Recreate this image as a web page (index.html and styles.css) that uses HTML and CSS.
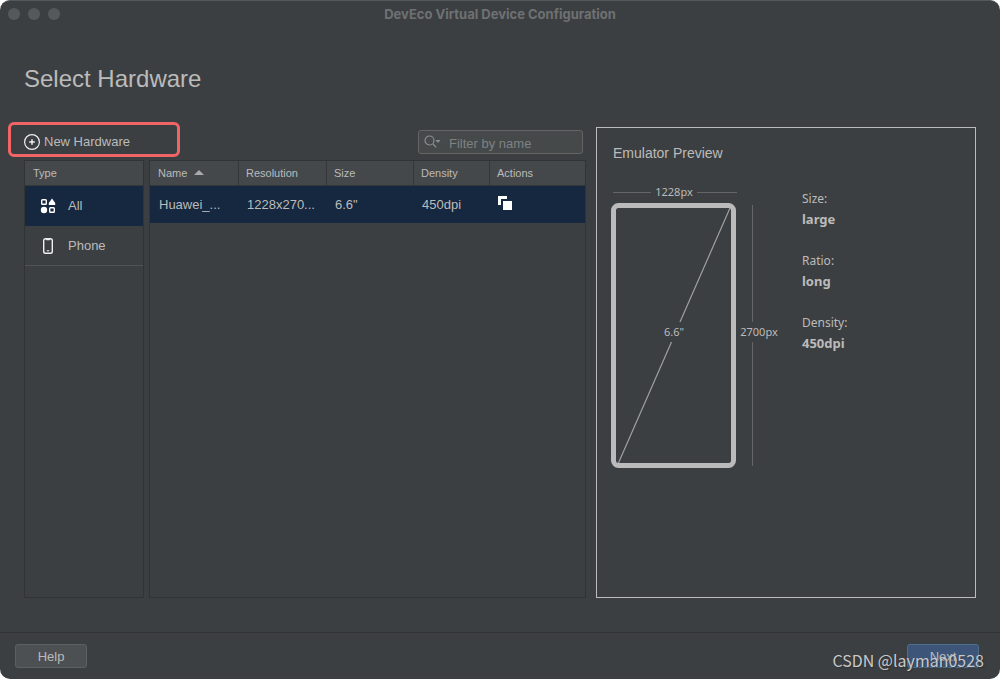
FILE: index.html
```
<!DOCTYPE html>
<html lang="en">
<head>
<meta charset="utf-8">
<title>DevEco Virtual Device Configuration</title>
<link rel="stylesheet" href="styles.css">
</head>
<body>
<div class="window">
  <header class="titlebar">
    <div class="lights"><span class="light"></span><span class="light"></span><span class="light"></span></div>
    <div class="window-title">DevEco Virtual Device Configuration</div>
  </header>
  <main class="main">
    <h1 class="heading">Select Hardware</h1>
    <div class="columns">
      <section class="picker">
        <div class="toolbar">
          <button class="new-hardware" type="button">
            <svg width="16" height="16" viewBox="0 0 16 16" fill="none" stroke="#eee" aria-hidden="true"><circle cx="8" cy="8" r="7.4" stroke-width="1.2"/><path d="M8 5.2v5.6M5.2 8h5.6" stroke-width="1.5"/></svg>
            New Hardware
          </button>
          <label class="search">
            <svg width="18" height="14" viewBox="0 0 18 14" aria-hidden="true"><circle cx="5.5" cy="5.5" r="4.5" fill="none" stroke="#8a8e90" stroke-width="1.2"/><path d="M9 9l3.2 3.4" stroke="#8a8e90" stroke-width="1.3"/><path d="M11.5 5h5l-2.5 3z" fill="#8a8e90"/></svg>
            <input class="search-input" type="text" placeholder="Filter by name" aria-label="Filter by name">
          </label>
        </div>
        <div class="panes">
          <nav class="types">
            <div class="types-head">Type</div>
            <button class="type type-selected" type="button">
              <svg width="16" height="16" viewBox="0 0 16 16" aria-hidden="true"><rect x="1.7" y="1.7" width="4.6" height="4.6" rx="0.8" fill="none" stroke="#fff" stroke-width="1.4"/><path d="M12 .6L15.200 5v2H8.800V5z" fill="#fff"/><circle cx="4" cy="12" r="3.200" fill="#fff"/><rect x="9.7" y="9.7" width="4.6" height="4.6" rx="0.8" fill="none" stroke="#fff" stroke-width="1.4"/></svg>
              All
            </button>
            <button class="type" type="button">
              <svg width="16" height="16" viewBox="0 0 16 16" aria-hidden="true"><rect x="3.7" y=".7" width="8.6" height="14.6" rx="1.8" fill="none" stroke="#eee" stroke-width="1.4"/><path d="M5.5 1h5l-.8 1.3H6.3zM6.8 12.3h2.4v1H6.8z" fill="#eee"/></svg>
              Phone
            </button>
          </nav>
          <div class="devices">
            <table class="table">
              <colgroup><col class="c-name"><col class="c-res"><col class="c-size"><col class="c-density"><col class="c-actions"></colgroup>
              <thead>
                <tr><th>Name <svg class="sort" width="10" height="5" viewBox="0 0 10 5" aria-hidden="true"><path d="M0 5L5 0l5 5z" fill="#aaa"/></svg></th><th>Resolution</th><th>Size</th><th>Density</th><th>Actions</th></tr>
              </thead>
              <tbody>
                <tr><td>Huawei_...</td><td>1228x270...</td><td>6.6"</td><td>450dpi</td><td><button class="copy" type="button" aria-label="Duplicate"><svg width="14" height="14" viewBox="0 0 14 14" fill="#fff" aria-hidden="true"><path d="M0 0h9v3H3v6H0z"/><path d="M5 5h9v9H5z"/></svg></button></td></tr>
              </tbody>
            </table>
          </div>
        </div>
      </section>
      <section class="preview">
        <h2 class="preview-title">Emulator Preview</h2>
        <div class="preview-body">
          <svg class="diagram" width="170" height="284" viewBox="0 0 170 284" role="img" aria-label="Device dimensions">
            <path d="M2 7.500h38M86 7.500h40M141.500 20v117M141.500 157v124" stroke="#666" fill="none"/>
            <path d="M119 23L69 137M60.500 157L7 279" stroke="#a0a0a0" stroke-width="1.2"/>
            <rect x="2.500" y="20.500" width="120" height="260" rx="5" fill="none" stroke="#bbb" stroke-width="5"/>
            <text x="63" y="11" text-anchor="middle">1228px</text>
            <text x="63" y="151" text-anchor="middle">6.6"</text>
            <text x="148" y="151" text-anchor="middle">2700px</text>
          </svg>
          <dl class="specs">
            <div><dt>Size:</dt><dd>large</dd></div>
            <div><dt>Ratio:</dt><dd>long</dd></div>
            <div><dt>Density:</dt><dd>450dpi</dd></div>
          </dl>
        </div>
      </section>
    </div>
  </main>
  <footer class="footer">
    <button class="btn" type="button">Help</button>
    <button class="btn btn-primary" type="button">Next</button>
    <span class="watermark">CSDN @layman0528</span>
  </footer>
</div>
</body>
</html>
```
FILE: styles.css
```
* { box-sizing: border-box; }
body {
  margin: 0;
  background: #fff;
  color: #bbb;
  font: 13px/16px "Liberation Sans", Arial, sans-serif;
}
button {
  font: inherit;
  color: inherit;
  margin: 0;
  border: 0;
  background: none;
}
svg { flex: none; }
.window {
  display: flex;
  flex-direction: column;
  min-height: 100vh;
  overflow: hidden;
  background: #3c3f41;
  border-top: 1px solid #53585b;
  border-radius: 10px;
}
.titlebar {
  display: grid;
  grid-template-columns: 1fr auto 1fr;
  align-items: center;
  height: 26px;
  padding: 0 8px;
}
.lights { display: flex; gap: 8px; }
.light {
  width: 12px;
  height: 12px;
  border-radius: 50%;
  background: #55595b;
}
.window-title {
  color: #6e7173;
  font-family: Inter, sans-serif;
  font-weight: 700;
}
.main {
  flex: 1;
  display: flex;
  flex-direction: column;
  padding: 36px 24px 34px;
}
.heading {
  margin: 0 0 32px;
  font-size: 24px;
  line-height: 32px;
  font-weight: 400;
}
.columns {
  flex: 1;
  display: grid;
  grid-template-columns: 562fr 380fr;
  gap: 10px;
}
.picker { display: flex; flex-direction: column; }
.toolbar {
  display: flex;
  align-items: flex-start;
  justify-content: space-between;
  height: 33px;
  padding-right: 3px;
}
.new-hardware {
  position: relative;
  display: flex;
  align-items: center;
  gap: 4px;
  height: 30px;
  padding: 0;
}
/* callout ring around the button */
.new-hardware::after {
  content: "";
  position: absolute;
  inset: -5px -50px 0 -16px;
  border: 3px solid #f26566;
  border-radius: 6px;
}
.search {
  display: flex;
  align-items: center;
  gap: 7px;
  width: 165px;
  height: 24px;
  padding: 0 5px;
  margin-top: 3px;
  background: #45494a;
  border: 1px solid #646464;
  border-radius: 3px;
}
.search-input {
  flex: 1;
  min-width: 0;
  padding: 3px 0 0;
  border: 0;
  outline: 0;
  background: none;
  color: #bbb;
  font: inherit;
}
.search-input::placeholder { color: #7f8283; opacity: 1; }
.panes {
  flex: 1;
  display: grid;
  grid-template-columns: 120px 1fr;
  gap: 5px;
}
.types, .devices { border: 1px solid #313335; }
.types-head, .table th {
  height: 25px;
  padding: 0 8px;
  background: #45484a;
  border-bottom: 1px solid #35383a;
  font-size: 11px;
  line-height: 24px;
  font-weight: 400;
  text-align: left;
}
.type {
  display: flex;
  align-items: center;
  gap: 12px;
  width: 100%;
  height: 40px;
  padding: 1px 15px 0;
  border-bottom: 1px solid #515355;
}
.type-selected {
  background: #16283f;
  border-bottom-color: #16283f;
}
.table {
  width: 100%;
  table-layout: fixed;
  border-spacing: 0;
}
.c-name { width: 88px; }
.c-res { width: 88px; }
.c-size { width: 87px; }
.c-density { width: 76px; }
.table th + th {
  padding-left: 7px;
  border-left: 1px solid #35383a;
}
.sort { margin-left: 4px; vertical-align: 2px; }
.table td {
  height: 37px;
  padding: 0 9px;
  background: #16283f;
  white-space: nowrap;
}
.copy { display: block; padding: 0; }
.preview {
  padding: 16px 14px;
  border: 1px solid #bbb;
}
.preview-title {
  margin: 0 0 23px;
  padding-left: 2px;
  font-size: 14px;
  line-height: 18px;
  font-weight: 400;
}
.preview-body {
  display: flex;
  align-items: flex-start;
  gap: 21px;
}
.diagram {
  fill: #bbb;
  font: 11px "Noto Sans", sans-serif;
}
.specs {
  display: flex;
  flex-direction: column;
  gap: 22px;
  margin: 4px 0 0;
  font: 12px/20px "Noto Sans", sans-serif;
}
.specs dd {
  margin: 0;
  font-size: 13px;
  font-weight: 700;
}
.footer {
  position: relative;
  display: flex;
  justify-content: space-between;
  padding: 11px 21px 11px 15px;
  border-top: 1px solid #323232;
}
.btn {
  width: 72px;
  height: 24px;
  padding: 2px 0 0;
  background: #4c5052;
  border: 1px solid #5e6060;
  border-radius: 3px;
}
.btn-primary {
  background: #3d5579;
  border-color: #4c708c;
}
.watermark {
  position: absolute;
  right: 16px;
  bottom: 7px;
  color: #c8c9ca;
  font: 16px/24px "Noto Sans CJK SC", sans-serif;
  text-shadow: 1px 1px 1px #2228;
  pointer-events: none;
}
```
